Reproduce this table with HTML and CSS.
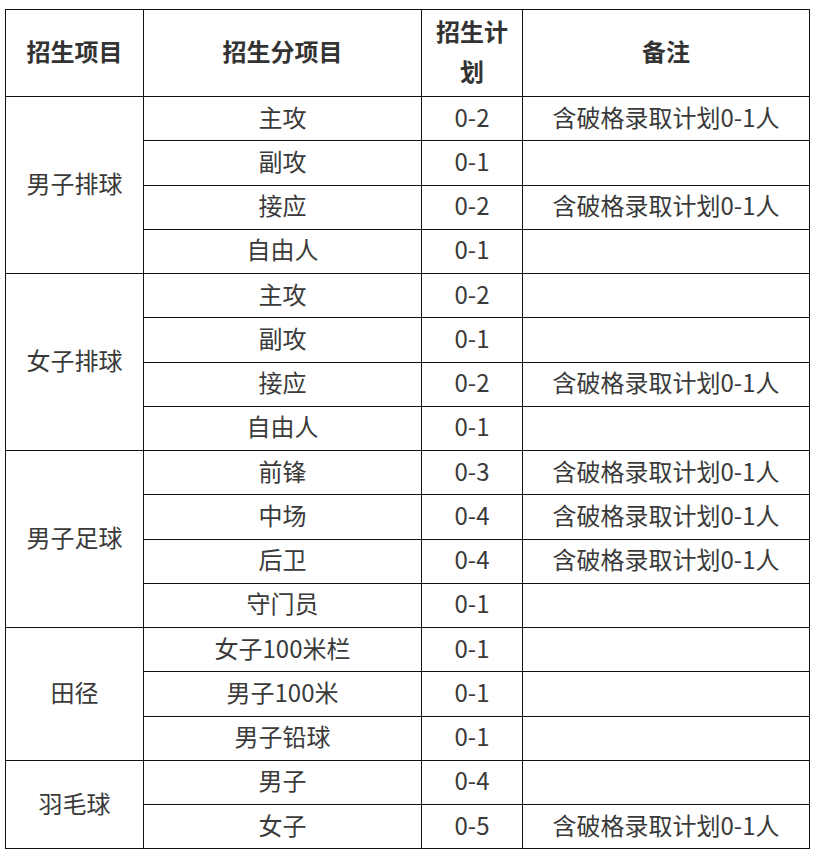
FILE: index.html
```html
<!DOCTYPE html>
<html lang="zh-CN">
<head>
<meta charset="utf-8">
<title>招生计划</title>
<link rel="stylesheet" href="styles.css">
</head>
<body>
<table class="plan">
  <colgroup>
    <col class="c1"><col class="c2"><col class="c3"><col class="c4">
  </colgroup>
  <thead>
    <tr class="head">
      <th>招生项目</th><th>招生分项目</th><th>招生计划</th><th>备注</th>
    </tr>
  </thead>
  <tbody>
    <tr><td rowspan="4">男子排球</td><td>主攻</td><td>0-2</td><td>含破格录取计划0-1人</td></tr>
    <tr><td>副攻</td><td>0-1</td><td></td></tr>
    <tr><td>接应</td><td>0-2</td><td>含破格录取计划0-1人</td></tr>
    <tr><td>自由人</td><td>0-1</td><td></td></tr>
    <tr><td rowspan="4">女子排球</td><td>主攻</td><td>0-2</td><td></td></tr>
    <tr><td>副攻</td><td>0-1</td><td></td></tr>
    <tr><td>接应</td><td>0-2</td><td>含破格录取计划0-1人</td></tr>
    <tr><td>自由人</td><td>0-1</td><td></td></tr>
    <tr><td rowspan="4">男子足球</td><td>前锋</td><td>0-3</td><td>含破格录取计划0-1人</td></tr>
    <tr><td>中场</td><td>0-4</td><td>含破格录取计划0-1人</td></tr>
    <tr><td>后卫</td><td>0-4</td><td>含破格录取计划0-1人</td></tr>
    <tr><td>守门员</td><td>0-1</td><td></td></tr>
    <tr><td rowspan="3">田径</td><td>女子100米栏</td><td>0-1</td><td></td></tr>
    <tr><td>男子100米</td><td>0-1</td><td></td></tr>
    <tr><td>男子铅球</td><td>0-1</td><td></td></tr>
    <tr><td rowspan="2">羽毛球</td><td>男子</td><td>0-4</td><td></td></tr>
    <tr><td>女子</td><td>0-5</td><td>含破格录取计划0-1人</td></tr>
  </tbody>
</table>
</body>
</html>
```

FILE: styles.css
```css
html, body {
  margin: 0;
  padding: 0;
  background: #ffffff;
}
body {
  font-family: "Noto Sans CJK SC", "Noto Sans", sans-serif;
  color: #3a3a3a;
}
.plan {
  margin: 9px 0 0 5px;
  width: 804px;
  border-collapse: collapse;
  table-layout: fixed;
  font-size: 24px;
  line-height: 36px;
}
.c1 { width: 138px; }
.c2 { width: 278px; }
.c3 { width: 101px; }
.c4 { width: 287px; }
.plan th, .plan td {
  border: 1.5px solid #111111;
  padding: 0 4px 4px;
  text-align: center;
  vertical-align: middle;
}
.plan th {
  font-weight: 700;
  color: #333333;
  line-height: 40px;
}
.head { height: 87px; }
.plan tbody tr { height: 44.25px; }
```
